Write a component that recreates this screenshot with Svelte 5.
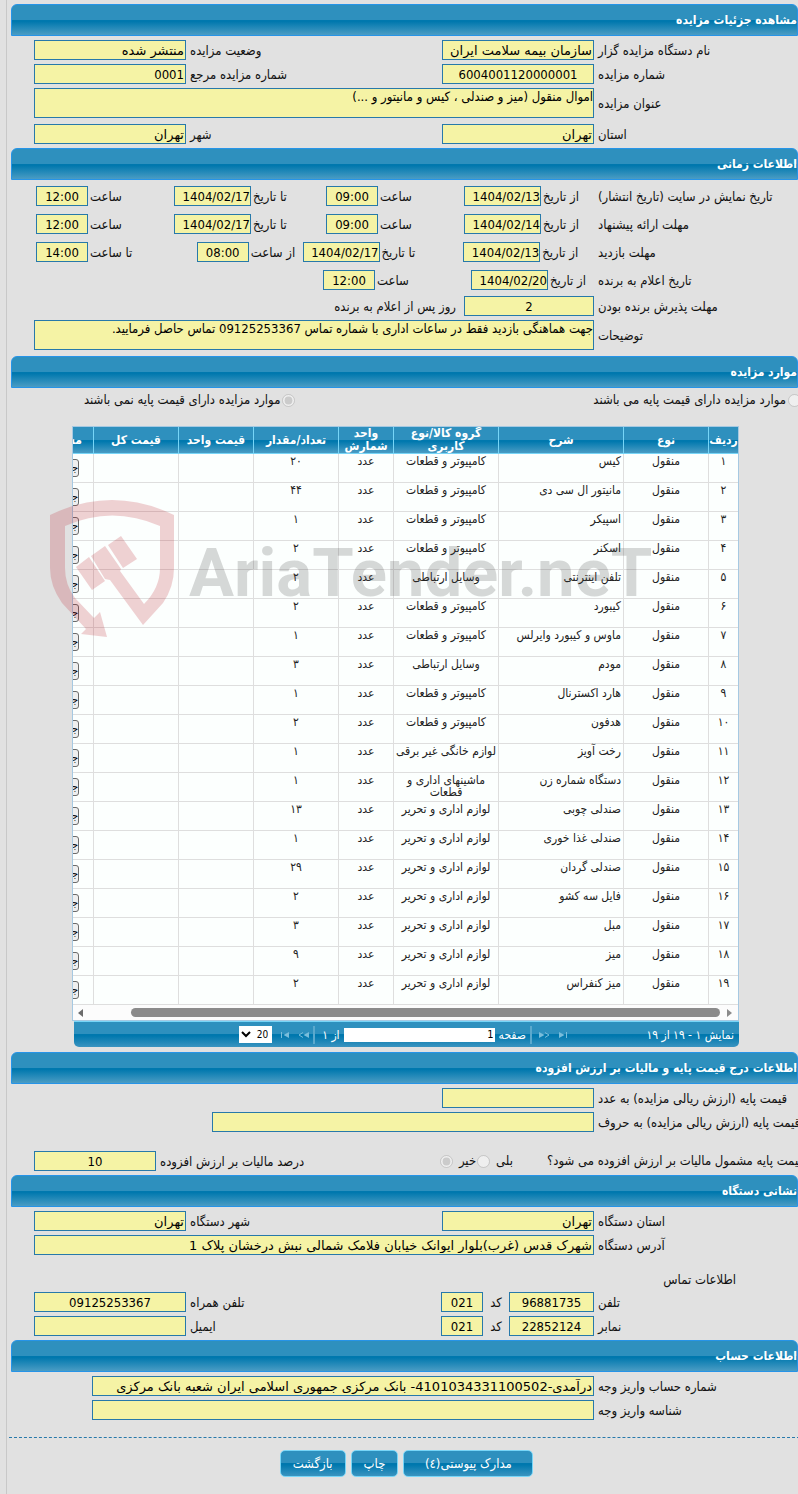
<script>
  const timeRows = [
    {
      label: 'تاریخ نمایش در سایت (تاریخ انتشار)', kind: 'even',
      cells: [['از تاریخ', '1404/02/13', 'date'], ['ساعت', '09:00', 'time'], ['تا تاریخ', '1404/02/17', 'date'], ['ساعت', '12:00', 'time']]
    },
    {
      label: 'مهلت ارائه پیشنهاد', kind: 'even',
      cells: [['از تاریخ', '1404/02/14', 'date'], ['ساعت', '09:00', 'time'], ['تا تاریخ', '1404/02/17', 'date'], ['ساعت', '12:00', 'time']]
    },
    {
      label: 'مهلت بازدید', kind: 'visit',
      cells: [['از تاریخ', '1404/02/13', 'date'], ['تا تاریخ', '1404/02/17', 'date'], ['از ساعت', '08:00', 'time'], ['تا ساعت', '14:00', 'time']]
    },
    {
      label: 'تاریخ اعلام به برنده', kind: 'winner',
      cells: [['از تاریخ', '1404/02/20', 'date'], ['ساعت', '12:00', 'time']]
    }
  ];

  const pc = 'کامپیوتر و قطعات';
  const comm = 'وسایل ارتباطی';
  const office = 'لوازم اداری و تحریر';
  const items = [
    ['کیس', pc, '۲۰'],
    ['مانیتور ال سی دی', pc, '۴۴'],
    ['اسپیکر', pc, '۱'],
    ['اسکنر', pc, '۲'],
    ['تلفن اینترنتی', comm, '۲'],
    ['کیبورد', pc, '۲'],
    ['ماوس و کیبورد وایرلس', pc, '۱'],
    ['مودم', comm, '۳'],
    ['هارد اکسترنال', pc, '۱'],
    ['هدفون', pc, '۲'],
    ['رخت آویز', 'لوازم خانگی غیر برقی', '۱'],
    ['دستگاه شماره زن', 'ماشینهای اداری و قطعات', '۱'],
    ['صندلی چوبی', office, '۱۳'],
    ['صندلی غذا خوری', office, '۱'],
    ['صندلی گردان', office, '۲۹'],
    ['فایل سه کشو', office, '۲'],
    ['مبل', office, '۳'],
    ['میز', office, '۹'],
    ['میز کنفراس', office, '۲']
  ];
  const fa = (n) => String(n).replace(/\d/g, (d) => '۰۱۲۳۴۵۶۷۸۹'[d]);
</script>

{#snippet pair(id, label, value, kind)}
  <label class="side" for={id}>{label}</label>
  <input class="box {kind}" {id} {value} readonly />
{/snippet}

<main dir="rtl">
  <section>
    <h2>مشاهده جزئیات مزایده</h2>
    <div class="rows">
      <div class="row">
        <label class="lead" for="org">نام دستگاه مزایده گزار</label>
        <input class="box mid words" id="org" value="سازمان بیمه سلامت ایران" readonly />
        {@render pair('state', 'وضعیت مزایده', 'منتشر شده', 'mid words')}
      </div>
      <div class="row">
        <label class="lead" for="num">شماره مزایده</label>
        <input class="box mid center" id="num" value="6004001120000001" readonly />
        {@render pair('ref', 'شماره مزایده مرجع', '0001', 'mid')}
      </div>
      <div class="row area">
        <label class="lead" for="title">عنوان مزایده</label>
        <textarea class="box fill" id="title" readonly>اموال منقول (میز و صندلی ، کیس و مانیتور و ...)</textarea>
      </div>
      <div class="row">
        <label class="lead" for="province">استان</label>
        <input class="box mid words" id="province" value="تهران" readonly />
        {@render pair('city', 'شهر', 'تهران', 'mid words')}
      </div>
    </div>
  </section>

  <section>
    <h2>اطلاعات زمانی</h2>
    <div class="rows">
      {#each timeRows as r, i}
        <div class="row tall">
          <span class="lead">{r.label}</span>
          <div class="times {r.kind}">
            {#each r.cells as [label, value, kind], j}
              <div class="cell">{@render pair(`t${i}-${j}`, label, value, kind)}</div>
            {/each}
          </div>
        </div>
      {/each}
      <div class="row">
        <label class="lead" for="days">مهلت پذیرش برنده بودن</label>
        <input class="box days center" id="days" value="2" readonly />
        <span class="after">روز پس از اعلام به برنده</span>
      </div>
      <div class="row area">
        <label class="lead" for="notes">توضیحات</label>
        <textarea class="box fill" id="notes" readonly>جهت هماهنگی بازدید فقط در ساعات اداری با شماره تماس 09125253367 تماس حاصل فرمایید.</textarea>
      </div>
    </div>
  </section>

  <section>
    <h2>موارد مزایده</h2>
    <div class="choices">
      <label><input type="radio" name="base" disabled />موارد مزایده دارای قیمت پایه می باشند</label>
      <label><input type="radio" name="base" checked disabled />موارد مزایده دارای قیمت پایه نمی باشند</label>
    </div>

    <div class="grid">
      <div class="view">
        <table>
          <colgroup>
            <col class="c30" /><col class="c85" /><col class="c125" /><col class="c105" /><col class="c55" />
            <col class="c85" /><col class="c75" /><col class="c85" /><col class="c150" />
          </colgroup>
          <thead>
            <tr>
              <th>ردیف</th><th>نوع</th><th>شرح</th><th>گروه کالا/نوع کاربری</th><th>واحد شمارش</th>
              <th>تعداد/مقدار</th><th>قیمت واحد</th><th>قیمت کل</th><th class="more">مشاهده</th>
            </tr>
          </thead>
          <tbody>
            {#each items as [name, group, count], i}
              <tr>
                <td>{fa(i + 1)}</td><td>منقول</td><td class="name">{name}</td><td>{group}</td><td>عدد</td>
                <td>{count}</td><td></td><td></td><td class="more"><button class="detail">جزئیات</button></td>
              </tr>
            {/each}
          </tbody>
        </table>
      </div>
      <div class="scroll">
        <svg viewBox="0 0 6 8" width="6" height="8"><path d="M0 0 5 4 0 8z" fill="#8b8b8b" /></svg>
        <div class="thumb"></div>
        <svg viewBox="0 0 6 8" width="6" height="8"><path d="M5 0 0 4 5 8z" fill="#6b6b6b" /></svg>
      </div>
      <div class="pager">
        <span class="count">نمایش ۱ - ۱۹ از ۱۹</span>
        <svg viewBox="0 0 9 8" width="9" height="8"><path d="M0 1 5.500 4 0 7zM7 1h1v6h-1z" fill="#79bddb" /></svg>
        <svg class="second" viewBox="0 0 11 8" width="11" height="8"><path d="M0 1 5.500 4 0 7z" fill="#79bddb" /><path d="M6 1.500 10 4 6 6.500" fill="none" stroke="#79bddb" /></svg>
        <i class="sep"></i>
        <label for="page">صفحه</label>
        <input id="page" value="1" />
        <span>از ۱</span>
        <i class="sep"></i>
        <svg viewBox="0 0 11 8" width="11" height="8"><path d="M11 1 5.500 4 11 7z" fill="#79bddb" /><path d="M5 1.500 1 4 5 6.500" fill="none" stroke="#79bddb" /></svg>
        <svg class="second" viewBox="0 0 9 8" width="9" height="8"><path d="M9 1 3.500 4 9 7zM1 1h1v6h-1z" fill="#79bddb" /></svg>
        <select aria-label="تعداد در صفحه"><option>20</option></select>
      </div>
      <div class="mark" dir="ltr">
        <svg viewBox="0 0 125 138" width="125" height="138">
          <path fill="#b80f1c" d="M0 15Q62-15 124 15V68Q124 87 113 103L93 125 60 80 55 79 41 56 55 46 71 69 70 71 94 104Q110 88 110 68V26Q62 5 15 26V68Q15 85 25 98L44 118 50 112 57 137 31 134 36 129 12 103Q0 86 0 68z" />
          <path fill="#b80f1c" d="M26 67 39 57 55 81 42 90zM58 45 71 36 87 59 73 68z" />
        </svg>
        <span>AriaTender.neT</span>
      </div>
    </div>
  </section>

  <section>
    <h2>اطلاعات درج قیمت پایه و مالیات بر ارزش افزوده</h2>
    <div class="rows">
      <div class="row">
        <label class="lead" for="price">قیمت پایه (ارزش ریالی مزایده) به عدد</label>
        <input class="box mid" id="price" readonly />
      </div>
      <div class="row spelled">
        <label class="lead" for="words">قیمت پایه (ارزش ریالی مزایده) به حروف</label>
        <input class="box fill" id="words" readonly />
      </div>
      <div class="row tax">
        <span class="question">قیمت پایه مشمول مالیات بر ارزش افزوده می شود؟</span>
        <label class="yes">بلی<input type="radio" name="vat" disabled /></label>
        <label class="no">خیر<input type="radio" name="vat" checked disabled /></label>
        {@render pair('vat', 'درصد مالیات بر ارزش افزوده', '10', 'percent center')}
      </div>
    </div>
  </section>

  <section>
    <h2>نشانی دستگاه</h2>
    <div class="rows">
      <div class="row">
        <label class="lead" for="oprov">استان دستگاه</label>
        <input class="box mid words" id="oprov" value="تهران" readonly />
        {@render pair('ocity', 'شهر دستگاه', 'تهران', 'mid words')}
      </div>
      <div class="row">
        <label class="lead" for="addr">آدرس دستگاه</label>
        <input class="box fill words" id="addr" value="شهرک قدس (غرب)بلوار ایوانک خیابان فلامک شمالی نبش درخشان پلاک 1" readonly />
      </div>
      <h3>اطلاعات تماس</h3>
      <div class="row">
        <label class="lead" for="tel">تلفن</label>
        <input class="box phone center" id="tel" value="96881735" readonly />
        <label class="code" for="telc">کد</label>
        <input class="box area-code center" id="telc" value="021" readonly />
        {@render pair('mobile', 'تلفن همراه', '09125253367', 'mid center')}
      </div>
      <div class="row">
        <label class="lead" for="fax">نمابر</label>
        <input class="box phone center" id="fax" value="22852124" readonly />
        <label class="code" for="faxc">کد</label>
        <input class="box area-code center" id="faxc" value="021" readonly />
        {@render pair('mail', 'ایمیل', '', 'mid')}
      </div>
    </div>
  </section>

  <section>
    <h2>اطلاعات حساب</h2>
    <div class="rows account">
      <div class="row">
        <label class="lead" for="acc">شماره حساب واریز وجه</label>
        <input class="box fill words" id="acc" value="درآمدی-4101034331100502- بانک مرکزی جمهوری اسلامی ایران شعبه بانک مرکزی" readonly />
      </div>
      <div class="row">
        <label class="lead" for="payid">شناسه واریز وجه</label>
        <input class="box fill" id="payid" readonly />
      </div>
    </div>
  </section>

  <footer>
    <button class="docs">مدارک پیوستی(٤)</button>
    <button>چاپ</button>
    <button>بازگشت</button>
  </footer>
</main>

<style>
  :global(body) {
    margin: 0;
    background: #e1e1e1;
    overflow-x: hidden;
  }
  main, main :is(input, textarea, button, select) {
    font-family: 'DejaVu Sans Condensed', 'DejaVu Sans', sans-serif;
    box-sizing: border-box;
  }
  main {
    min-height: 100vh;
    margin-left: 6px;
    padding: 4px 0 0 4px;
    border-left: 1px solid #c8c8c8;
    font-size: 13px;
    line-height: 16px;
    color: #111;
    overflow: hidden;
  }
  h2 {
    box-sizing: border-box;
    height: 32px;
    margin: 0;
    border: 1px solid #2694e8;
    border-radius: 6px 6px 0 0;
    background: linear-gradient(#2e90be 50%, #0078ae 50%, #0078ae 55%, #4a9cc4);
    color: #fff;
    font-size: 12px;
    line-height: 30px;
    white-space: nowrap;
  }
  h3 {
    margin: 13px 62px 0 0;
    font: inherit;
  }
  .rows {
    display: flex;
    flex-direction: column;
    gap: 4px;
    padding: 4px 0 4px 23px;
  }
  .row {
    display: flex;
    align-items: center;
    gap: 4px;
    white-space: nowrap;
  }
  .row.tall { height: 24px; gap: 0; }
  .row.area { margin-bottom: 2px; }
  .row.spelled { padding-left: 178px; margin-bottom: 15px; }
  .rows.account { padding-left: 81px; }
  .lead {
    display: flex;
    flex: 0 0 200px;
    justify-content: flex-end;
    min-width: 0;
    padding-top: 2px;
    box-sizing: border-box;
  }
  .side {
    flex: 1;
    text-align: left;
    padding-top: 2px;
  }
  .after { padding: 2px 4px 0 0; }
  .box {
    height: 20px;
    margin: 0;
    padding: 0 1px;
    border: 1px solid #2779aa;
    border-radius: 0;
    background: #f5f3a5;
    color: #000;
    font-size: 13px;
    outline: none;
  }
  main .words { font-family: 'DejaVu Sans', sans-serif; }
  textarea.box {
    height: 30px;
    padding: 0;
    line-height: 16px;
    resize: none;
    overflow: hidden;
    white-space: pre-wrap;
  }
  .mid { width: 152px; }
  .fill { flex: 1; min-width: 0; }
  .days { width: 130px; }
  .percent { width: 122px; }
  .phone { width: 85px; }
  .area-code { width: 42px; }
  .date { width: 77px; padding: 0; }
  .time { width: 52px; text-align: center; }
  .center { text-align: center; }
  .code { width: 18px; padding-top: 2px; text-align: center; }
  .times {
    flex: 1;
    display: grid;
    margin-left: 2px;
  }
  .even { grid-template-columns: 134fr 138fr 152fr 138fr; }
  .visit { grid-template-columns: 135fr 161fr 106fr 161fr; }
  .winner { grid-template-columns: 127fr 148fr 287fr; }
  .cell {
    display: flex;
    align-items: center;
    gap: 2px;
  }
  input[type='radio'] {
    width: 13px;
    height: 13px;
    margin: 0;
    flex: none;
  }
  .tax label:not(.side) { display: flex; align-items: center; }
  .question {
    flex: 0 0 251px;
    min-width: 0;
    display: flex;
    justify-content: flex-end;
  }
  .yes { margin-right: 30px; gap: 6px; }
  .no { margin-right: -3px; gap: 6px; }

  .choices {
    display: flex;
    height: 38px;
    margin-right: -3px;
    padding-top: 4px;
    box-sizing: border-box;
    white-space: nowrap;
  }
  .choices label {
    display: flex;
    gap: 2px;
    height: 16px;
    align-items: center;
  }
  .choices label:first-child { flex: 0 0 64%; }

  .grid {
    position: relative;
    margin: 0 59px 5px 61px;
  }
  .view {
    overflow: hidden;
    border: 1px solid #a6c9e2;
    border-bottom: 0;
    background: #fcfffe;
  }
  table {
    table-layout: fixed;
    border-collapse: separate;
    border-spacing: 0;
    width: 795px;
    color: #222;
  }
  .c30 { width: 30px; }
  .c55 { width: 55px; }
  .c75 { width: 75px; }
  .c85 { width: 85px; }
  .c105 { width: 105px; }
  .c125 { width: 125px; }
  .c150 { width: 150px; }
  th {
    height: 27px;
    box-sizing: border-box;
    padding: 0;
    border-left: 1px solid #77d5f7;
    border-bottom: 1px solid #77d5f7;
    background: linear-gradient(#2e90be 50%, #0078ae 50%, #0078ae 55%, #4a9cc4);
    color: #fff;
    font-size: 12px;
    line-height: 13px;
  }
  td {
    height: 29px;
    box-sizing: border-box;
    padding: 1px 1px 0;
    border-left: 1px solid #dedede;
    border-bottom: 1px solid #dedede;
    text-align: center;
    vertical-align: top;
    font-size: 12px;
    line-height: 12px;
  }
  td.name { text-align: right; padding-right: 2px; }
  th.more { text-align: right; padding-right: 11px; }
  td.more { text-align: right; padding: 5px 14px 0 0; }
  .detail {
    height: 18px;
    padding: 0;
    border: 1px solid #6b6b6b;
    border-radius: 3px;
    background: #efefef;
    font-size: 11px;
    line-height: 14px;
  }
  .scroll {
    display: flex;
    align-items: center;
    justify-content: space-between;
    height: 15px;
    padding: 0 5px;
    border: solid #a6c9e2;
    border-width: 0 1px 1px;
    background: #fcfcfc;
  }
  .thumb {
    flex: 1;
    height: 9px;
    margin: 0 7px 0 47px;
    border-radius: 5px;
    background: #8b8b8b;
  }
  .pager {
    display: flex;
    align-items: center;
    height: 26px;
    box-sizing: border-box;
    margin-left: 2px;
    padding-right: 5px;
    border-top: 1px solid #77d5f7;
    border-radius: 0 0 5px 5px;
    background: linear-gradient(#2e90be 50%, #0078ae 50%, #0078ae 55%, #3a94c0);
    color: #fff;
    font-size: 12px;
    white-space: nowrap;
  }
  .count { flex: 0 0 166px; }
  .second { margin-right: 9px; }
  .sep {
    width: 2px;
    height: 18px;
    margin: 0 7px 0 4px;
    background: #5ba9cd;
  }
  .pager input {
    width: 151px;
    height: 14px;
    margin: 0 4px;
    padding: 0 1px;
    border: 0;
    background: #fff;
    font-size: 11px;
  }
  .pager select {
    width: 33px;
    height: 17px;
    margin-right: 8px;
    padding: 0;
    border: 0;
    background: #fff;
    color: #000;
    font-size: 10px;
  }
  .mark {
    position: absolute;
    left: -22px;
    top: 74px;
    display: flex;
    align-items: center;
    gap: 14px;
    pointer-events: none;
  }
  .mark svg { opacity: 0.19; }
  .mark span {
    padding-top: 8px;
    color: rgba(60, 60, 60, 0.2);
    font: bold 67px/80px Roboto, sans-serif;
  }

  footer {
    display: flex;
    justify-content: center;
    gap: 5px;
    margin: 13px -2px 0;
    padding: 12px 0 17px 4px;
    border-top: 1px dashed #2779aa;
  }
  footer button {
    height: 27px;
    padding: 0 12px;
    border: 1px solid #77d5f7;
    border-radius: 5px;
    background: linear-gradient(#2e90be 50%, #0078ae 50%, #0078ae 55%, #3a94c0);
    color: #fff;
    font-size: 13px;
  }
  .docs { width: 130px; }
</style>
